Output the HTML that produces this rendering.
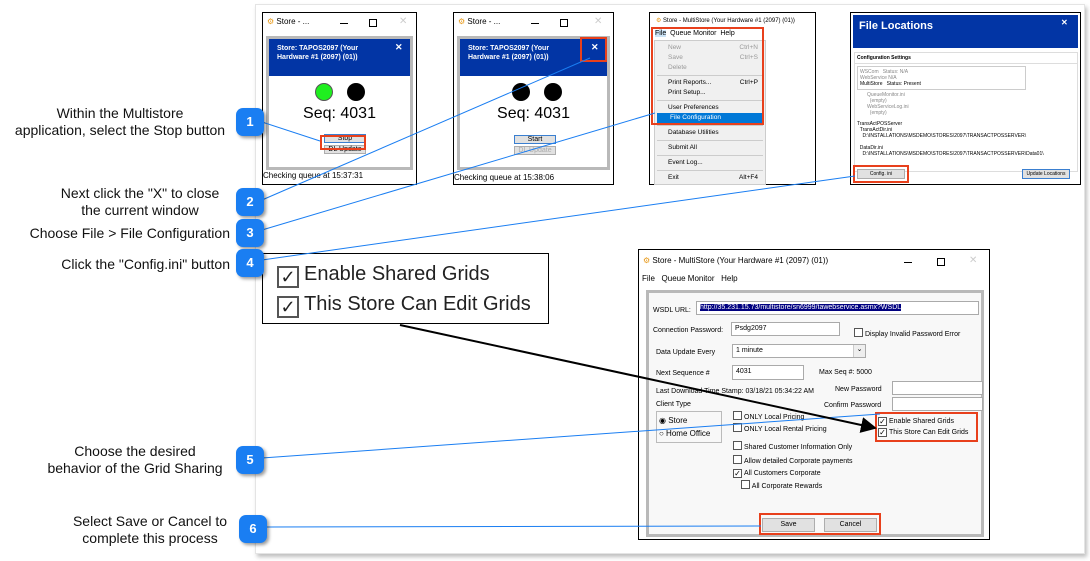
<!DOCTYPE html>
<html><head><meta charset="utf-8"><style>
*{margin:0;padding:0;box-sizing:border-box}
body{width:1090px;height:561px;background:#fff;position:relative;overflow:hidden;font-family:"Liberation Sans",Arial,sans-serif;color:#000}
.a{position:absolute}
.frame{position:absolute;left:255px;top:4px;width:830px;height:550px;border:1px solid #e4e4e4;box-shadow:2px 3px 4px rgba(0,0,0,.25);background:#fff}
.lbl{position:absolute;font-size:14px;line-height:17px;text-align:center;color:#111}
.badge{position:absolute;width:28px;height:28px;border-radius:7px;background:#1a7ef2;color:#fff;font-weight:bold;font-size:13px;text-align:center;line-height:28px;box-shadow:2px 2px 3px rgba(0,0,0,.4)}
.win{position:absolute;border:1px solid #000;background:#fff}
.red{position:absolute;border:2px solid #e8401c}
.cb{display:inline-block;width:9px;height:9px;border:1px solid #555;background:#fff;vertical-align:-1px;margin-right:2px;font-size:8px;line-height:7px;text-align:center}
.in{position:absolute;border:1px solid #aaa;background:#fff;font-size:7px;padding:2px 3px}
.btn{position:absolute;background:#e1e1e1;border:1px solid #adadad;font-size:7px;text-align:center}
</style></head><body>
<div class="frame"></div>

<div class="lbl" style="left:10px;top:105px;width:220px">Within the Multistore<br>application, select the Stop button</div>
<div class="lbl" style="left:40px;top:185px;width:200px">Next click the "X" to close<br>the current window</div>
<div class="lbl" style="left:10px;top:225px;width:220px;text-align:right">Choose File &gt; File Configuration</div>
<div class="lbl" style="left:10px;top:256px;width:220px;text-align:right">Click the "Config.ini" button</div>
<div class="lbl" style="left:30px;top:443px;width:210px">Choose the desired<br>behavior of the Grid Sharing</div>
<div class="lbl" style="left:45px;top:513px;width:210px">Select Save or Cancel to<br>complete this process</div>

<div class="win" style="left:262px;top:12px;width:155px;height:173px">
 <div class="a" style="left:4px;top:4px;font-size:8px"><span style="color:#e89a1a">⚙</span> Store - ...</div>
 <div class="a" style="left:77px;top:10px;width:8px;border-top:1px solid #000"></div>
 <div class="a" style="left:106px;top:6px;width:8px;height:8px;border:1px solid #000"></div>
 <div class="a" style="left:136px;top:3px;font-size:10px;color:#ccc">✕</div>
 <div class="a" style="left:3px;top:23px;width:147px;height:134px;border:3px solid #b9b9b9;background:#fff">
  <div class="a" style="left:0;top:0;width:141px;height:37px;background:#0235a5;color:#fff;font-size:7px;font-weight:bold;padding:5px 8px;line-height:9px">Store: TAPOS2097 (Your<br>Hardware #1 (2097) (01))<span class="a" style="left:126px;top:4px;font-size:9px">✕</span></div>
  <div class="a" style="left:46px;top:44px;width:18px;height:18px;border-radius:50%;background:#1fef1f;border:1px solid #555"></div>
  <div class="a" style="left:78px;top:44px;width:18px;height:18px;border-radius:50%;background:#000"></div>
  <div class="a" style="left:0;top:66px;width:141px;text-align:center;font-size:16px">Seq: 4031</div>
  <div class="btn" style="left:55px;top:95px;width:42px;height:9px;line-height:7px;border-color:#3a7fd0">Stop</div>
  <div class="btn" style="left:55px;top:106px;width:42px;height:9px;line-height:7px">DL Update</div>
 </div>
 <div class="a" style="left:0;top:158px;font-size:8px">Checking queue at 15:37:31</div>
</div>
<div class="red" style="left:320px;top:135px;width:46px;height:15px"></div>

<div class="win" style="left:453px;top:12px;width:161px;height:173px">
 <div class="a" style="left:4px;top:4px;font-size:8px"><span style="color:#e89a1a">⚙</span> Store - ...</div>
 <div class="a" style="left:77px;top:10px;width:8px;border-top:1px solid #000"></div>
 <div class="a" style="left:106px;top:6px;width:8px;height:8px;border:1px solid #000"></div>
 <div class="a" style="left:140px;top:3px;font-size:10px;color:#ccc">✕</div>
 <div class="a" style="left:3px;top:23px;width:153px;height:134px;border:3px solid #b9b9b9;background:#fff">
  <div class="a" style="left:0;top:0;width:147px;height:37px;background:#0235a5;color:#fff;font-size:7px;font-weight:bold;padding:5px 8px;line-height:9px">Store: TAPOS2097 (Your<br>Hardware #1 (2097) (01))<span class="a" style="left:131px;top:4px;font-size:9px">✕</span></div>
  <div class="a" style="left:52px;top:44px;width:18px;height:18px;border-radius:50%;background:#000"></div>
  <div class="a" style="left:84px;top:44px;width:18px;height:18px;border-radius:50%;background:#000"></div>
  <div class="a" style="left:0;top:66px;width:147px;text-align:center;font-size:16px">Seq: 4031</div>
  <div class="btn" style="left:54px;top:96px;width:42px;height:9px;line-height:7px;border-color:#3a7fd0">Start</div>
  <div class="btn" style="left:54px;top:107px;width:42px;height:9px;line-height:7px;color:#aaa">DL Update</div>
 </div>
 <div class="a" style="left:0;top:160px;font-size:8px">Checking queue at 15:38:06</div>
</div>
<div class="red" style="left:580px;top:37px;width:27px;height:25px"></div>

<div class="win" style="left:649px;top:12px;width:167px;height:173px">
 <div class="a" style="left:6px;top:4px;font-size:6px;white-space:nowrap"><span style="color:#e89a1a">⚙</span> Store - MultiStore (Your Hardware #1 (2097) (01))</div>
 <div class="a" style="left:5px;top:17px;font-size:7px"><span style="background:#cce4f7">File</span>&nbsp; Queue Monitor &nbsp;Help</div>
 <div class="a" style="left:4px;top:27px;width:112px;height:145px;background:#f0f0f0;border:1px solid #ccc;font-size:6.5px;line-height:10px">
  <div style="padding:2px 13px 0;color:#999">New<span style="float:right;margin-right:-6px">Ctrl+N</span><br>Save<span style="float:right;margin-right:-6px">Ctrl+S</span><br>Delete</div>
  <div style="border-top:1px solid #ccc;margin:2px 2px"></div>
  <div style="padding:0 13px">Print Reports...<span style="float:right;margin-right:-6px">Ctrl+P</span><br>Print Setup...</div>
  <div style="border-top:1px solid #ccc;margin:2px 2px"></div>
  <div style="padding:0 13px">User Preferences</div>
  <div style="padding:0 13px;background:#0078d7;color:#fff;margin:0 2px">File Configuration</div>
  <div style="border-top:1px solid #ccc;margin:2px 2px"></div>
  <div style="padding:0 13px">Database Utilities</div>
  <div style="border-top:1px solid #ccc;margin:2px 2px"></div>
  <div style="padding:0 13px">Submit All</div>
  <div style="border-top:1px solid #ccc;margin:2px 2px"></div>
  <div style="padding:0 13px">Event Log...</div>
  <div style="border-top:1px solid #ccc;margin:2px 2px"></div>
  <div style="padding:0 13px">Exit<span style="float:right;margin-right:-6px">Alt+F4</span></div>
 </div>
</div>
<div class="red" style="left:651px;top:27px;width:113px;height:98px"></div>

<div class="win" style="left:850px;top:12px;width:231px;height:173px">
 <div class="a" style="left:2px;top:2px;width:225px;height:33px;background:#0235a5;color:#fff;font-size:11px;font-weight:bold;padding:5px 6px">File Locations<span class="a" style="left:208px;top:3px;font-size:8px">✕</span></div>
 <div class="a" style="left:3px;top:39px;width:224px;height:120px;border:1px solid #ddd;font-size:5px;line-height:6px">
  <div style="font-weight:bold;padding:2px;border-bottom:1px solid #ddd">Configuration Settings</div>
  <div style="margin:2px;width:169px;border:1px solid #ccc;padding:2px;color:#888">WSCom &nbsp; Status: N/A<br>WebService N/A<br><span style="color:#000">MultiStore &nbsp; Status: Present</span></div>
  <div style="padding-left:12px;color:#888">QueueMonitor.ini<br>&nbsp;&nbsp;(empty)<br>WebServiceLog.ini<br>&nbsp;&nbsp;(empty)</div>
  <div style="padding:5px 2px 0">TransActPOSServer<br>&nbsp;&nbsp;TransActDir.ini<br>&nbsp;&nbsp;&nbsp;&nbsp;D:\INSTALLATIONS\MSDEMO\STORES\2097\TRANSACTPOSSERVER\<br><br>&nbsp;&nbsp;DataDir.ini<br>&nbsp;&nbsp;&nbsp;&nbsp;D:\INSTALLATIONS\MSDEMO\STORES\2097\TRANSACTPOSSERVER\Data01\</div>
 </div>
 <div class="btn" style="left:6px;top:156px;width:48px;height:10px;font-size:5px;line-height:8px">Config. ini</div>
 <div class="btn" style="left:171px;top:156px;width:48px;height:10px;font-size:5px;line-height:8px;border-color:#3a7fd0">Update Locations</div>
</div>
<div class="red" style="left:853px;top:165px;width:56px;height:18px"></div>

<div class="win" style="left:262px;top:253px;width:287px;height:71px;font-size:20px;line-height:30px;padding:5px 0 0 14px;color:#222">
 <div><span class="cb" style="width:22px;height:22px;border:2px solid #555;font-size:18px;line-height:18px;vertical-align:-3px;margin-right:5px">✓</span>Enable Shared Grids</div>
 <div><span class="cb" style="width:22px;height:22px;border:2px solid #555;font-size:18px;line-height:18px;vertical-align:-3px;margin-right:5px">✓</span>This Store Can Edit Grids</div>
</div>

<div class="win" style="left:638px;top:249px;width:352px;height:291px;font-size:7px">
 <div class="a" style="left:4px;top:6px;font-size:8px"><span style="color:#e89a1a">⚙</span> Store - MultiStore (Your Hardware #1 (2097) (01))</div>
 <div class="a" style="left:265px;top:12px;width:8px;border-top:1px solid #000"></div>
 <div class="a" style="left:298px;top:8px;width:8px;height:8px;border:1px solid #000"></div>
 <div class="a" style="left:330px;top:5px;font-size:10px;color:#ccc">✕</div>
 <div class="a" style="left:3px;top:24px;font-size:8px">File &nbsp; Queue Monitor &nbsp; Help</div>
 <div class="a" style="left:7px;top:40px;width:338px;height:247px;border:3px solid #b9b9b9;background:#f8f8f8">
  <div class="a" style="left:4px;top:14px">WSDL URL:</div>
  <div class="in" style="left:47px;top:8px;width:283px;height:14px"><span style="background:#000080;color:#fff">http://35.231.15.73/multistore/sn6999/tawebservice.asmx?WSDL</span></div>
  <div class="a" style="left:4px;top:34px">Connection Password:</div>
  <div class="in" style="left:82px;top:29px;width:109px;height:14px">Psdg2097</div>
  <div class="a" style="left:205px;top:35px"><span class="cb"></span>Display Invalid Password Error</div>
  <div class="a" style="left:7px;top:56px">Data Update Every</div>
  <div class="in" style="left:83px;top:51px;width:134px;height:14px">1 minute<span class="a" style="right:0;top:0;width:12px;height:12px;background:#eee;border-left:1px solid #ccc;text-align:center">⌄</span></div>
  <div class="a" style="left:7px;top:77px">Next Sequence #</div>
  <div class="in" style="left:83px;top:72px;width:72px;height:15px">4031</div>
  <div class="a" style="left:170px;top:76px">Max Seq #: 5000</div>
  <div class="a" style="left:7px;top:95px">Last Download Time Stamp: 03/18/21 05:34:22 AM</div>
  <div class="a" style="left:186px;top:93px">New Password</div>
  <div class="in" style="left:243px;top:88px;width:91px;height:14px"></div>
  <div class="a" style="left:175px;top:109px">Confirm Password</div>
  <div class="in" style="left:243px;top:104px;width:91px;height:14px"></div>
  <div class="a" style="left:7px;top:108px">Client Type</div>
  <div class="a" style="left:7px;top:118px;width:66px;height:32px;border:1px solid #bbb;font-size:8px;line-height:13px;padding:2px 2px">◉ Store<br>○ Home Office</div>
  <div class="a" style="left:84px;top:118px;line-height:11px"><span class="cb"></span>ONLY Local Pricing<br><span class="cb"></span>ONLY Local Rental Pricing</div>
  <div class="a" style="left:84px;top:148px"><span class="cb"></span>Shared Customer Information Only</div>
  <div class="a" style="left:84px;top:162px;line-height:12px"><span class="cb"></span>Allow detailed Corporate payments<br><span class="cb">✓</span>All Customers Corporate<br>&nbsp;&nbsp;&nbsp;&nbsp;<span class="cb"></span>All Corporate Rewards</div>
  <div class="a" style="left:229px;top:123px;line-height:11px"><span class="cb">✓</span>Enable Shared Grids<br><span class="cb">✓</span>This Store Can Edit Grids</div>
  <div class="btn" style="left:113px;top:225px;width:53px;height:14px;line-height:12px">Save</div>
  <div class="btn" style="left:175px;top:225px;width:53px;height:14px;line-height:12px">Cancel</div>
 </div>
</div>
<div class="red" style="left:875px;top:412px;width:103px;height:30px"></div>
<div class="red" style="left:759px;top:513px;width:122px;height:22px"></div>

<svg class="a" style="left:0;top:0" width="1090" height="561">
 <defs><marker id="ar" markerWidth="8" markerHeight="8" refX="7" refY="4" orient="auto"><path d="M0,0 L8,4 L0,8z" fill="#000"/></marker></defs>
 <g stroke="#1a7ef2" stroke-width="1" fill="none">
  <line x1="262" y1="122" x2="320" y2="141"/>
  <line x1="262" y1="200" x2="590" y2="58"/>
  <line x1="262" y1="230" x2="655" y2="113"/>
  <line x1="262" y1="260" x2="855" y2="176"/>
  <line x1="262" y1="458" x2="880" y2="414"/>
  <line x1="266" y1="527" x2="761" y2="526"/>
 </g>
 <line x1="400" y1="325" x2="875" y2="428" stroke="#000" stroke-width="2" marker-end="url(#ar)"/>
</svg>

<div class="badge" style="left:236px;top:108px">1</div>
<div class="badge" style="left:236px;top:188px">2</div>
<div class="badge" style="left:236px;top:219px">3</div>
<div class="badge" style="left:236px;top:249px">4</div>
<div class="badge" style="left:236px;top:446px">5</div>
<div class="badge" style="left:239px;top:515px">6</div>
</body></html>
